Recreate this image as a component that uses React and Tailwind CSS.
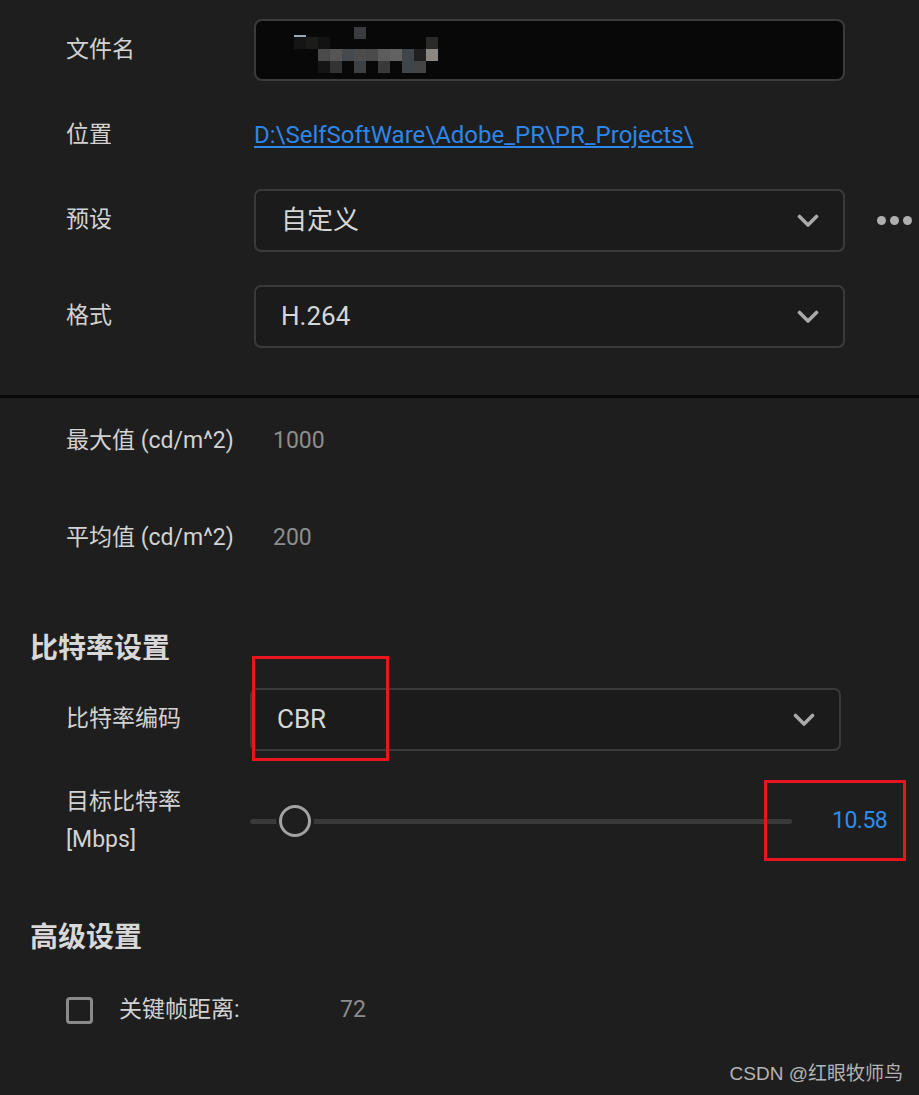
import { useState } from "react";

const font = { fontFamily: 'Roboto, "Noto Sans CJK SC", sans-serif' };

const Chevron = () => (
  <svg width="22" height="14" viewBox="0 0 22 14" className="shrink-0">
    <path d="M2.5 2.5 L11 11 L19.5 2.5" fill="none" stroke="#a9a9a9" strokeWidth="3.6" strokeLinecap="round" strokeLinejoin="round" />
  </svg>
);

// pixelated (blurred) file name
const Mosaic = () => {
  const cells = [
    [0, 0, "#151515"], [12, 0, "#1c1c1a"], [24, 0, "#121212"], [60, -10, "#3a3b3e"],
    [24, 12, "#4a4a4a"], [36, 12, "#555"], [48, 12, "#454a4e"], [60, 12, "#4c4c4c"], [72, 12, "#4a4a4a"],
    [84, 12, "#5c5c5c"], [96, 12, "#626262"], [108, 12, "#3f454a"], [120, 12, "#202020"], [132, 12, "#8a8782"],
    [24, 24, "#151515"], [36, 24, "#333"], [60, 24, "#3e4144"], [84, 24, "#3a3a3a"], [108, 24, "#3d464c"], [120, 24, "#444"],
    [132, 0, "#2a2a28"],
  ];
  return (
    <svg width="150" height="46" viewBox="0 -10 150 46">
      <rect x="0" y="-2" width="12" height="2" fill="#9ab" />
      {cells.map(([x, y, c], i) => (
        <rect key={i} x={x} y={y} width="12" height="12" fill={c} />
      ))}
    </svg>
  );
};

const Row = ({ label, h, children, className = "" }) => (
  <div className={`flex items-center ${className}`} style={{ height: h }}>
    <div className="w-[188px] shrink-0 text-[23px] text-[#d2d2d2]">{label}</div>
    {children}
  </div>
);

const Select = ({ value, width = "w-[591px]" }) => (
  <div className={`${width} h-full flex items-center justify-between pl-[25px] pr-[24px] bg-[#1b1b1b] border-2 border-[#3a3a3a] rounded-[7px]`}>
    <span className="text-[26px] text-[#d6d6d6]">{value}</span>
    <Chevron />
  </div>
);

export default function App() {
  const [keyframe, setKeyframe] = useState(false);

  return (
    <div className="relative w-[919px] h-[1095px] overflow-hidden bg-[#1e1e1e]" style={font}>
      {/* output settings */}
      <div className="pl-[66px] pt-[19px]">
        <Row label="文件名" h={62}>
          <div className="w-[591px] h-full flex items-center pl-[38px] bg-[#080808] border-2 border-[#3b3b3b] rounded-[8px]">
            <Mosaic />
          </div>
        </Row>
        <Row label="位置" h={108}>
          <a className="text-[24px] text-[#2d86e8] underline underline-offset-[3px]">
            D:\SelfSoftWare\Adobe_PR\PR_Projects\
          </a>
        </Row>
        <Row label="预设" h={63}>
          <Select value="自定义" />
          <div className="flex gap-[4px] ml-[32px]">
            <span className="w-[9px] h-[9px] rounded-full bg-[#b0b0b0]" />
            <span className="w-[9px] h-[9px] rounded-full bg-[#b0b0b0]" />
            <span className="w-[9px] h-[9px] rounded-full bg-[#b0b0b0]" />
          </div>
        </Row>
        <Row label="格式" h={63} className="mt-[33px]">
          <Select value="H.264" />
        </Row>
      </div>

      <div className="mt-[47px] h-[3px] bg-[#0a0a0a]" />

      {/* HDR */}
      <div className="pl-[66px] pt-[18px]">
        <div className="flex items-center h-[50px] text-[23px]">
          <span className="w-[207px] text-[#d2d2d2]">最大值 (cd/m^2)</span>
          <span className="text-[#8d8d8d]">1000</span>
        </div>
        <div className="flex items-center h-[50px] mt-[47px] text-[23px]">
          <span className="w-[207px] text-[#d2d2d2]">平均值 (cd/m^2)</span>
          <span className="text-[#8d8d8d]">200</span>
        </div>
      </div>

      {/* bitrate */}
      <div className="pl-[30px] mt-[68px]">
        <h2 className="text-[28px] font-bold text-[#d8d8d8] leading-[36px]">比特率设置</h2>
      </div>
      <div className="pl-[66px] mt-[21px]">
        <div className="flex items-center h-[63px]">
          <div className="w-[184px] shrink-0 text-[23px] text-[#d2d2d2]">比特率编码</div>
          <Select value="CBR" />
        </div>
        <div className="flex items-center mt-[25px] h-[90px]">
          <div className="w-[184px] shrink-0 text-[23px] leading-[38px] text-[#d2d2d2]">
            目标比特率
            <br />
            [Mbps]
          </div>
          <div className="relative w-[542px] h-[34px] flex items-center">
            <div className="w-full h-[5px] rounded-full bg-[#3a3a3a]" />
            <div className="absolute left-[29px] top-[1px] w-[32px] h-[32px] rounded-full border-[3px] border-[#a3a3a3] bg-[#1e1e1e] ring-[3px] ring-[#1e1e1e]" />
          </div>
          <span className="ml-[40px] text-[23px] text-[#2d8cf0] tracking-[-0.5px]">10.58</span>
        </div>
      </div>

      {/* advanced */}
      <div className="pl-[30px] mt-[54px]">
        <h2 className="text-[28px] font-bold text-[#d8d8d8] leading-[36px]">高级设置</h2>
      </div>
      <div className="pl-[66px] mt-[34px] flex items-center h-[40px]">
        <button
          onClick={() => setKeyframe(!keyframe)}
          className="w-[27px] h-[27px] rounded-[4px] border-[3px] border-[#8a8a8a]"
        />
        <span className="ml-[26px] w-[221px] text-[23px] text-[#d2d2d2]">关键帧距离:</span>
        <span className="text-[23px] text-[#8d8d8d]">72</span>
      </div>

      {/* annotations */}
      <div className="absolute left-[252px] top-[656px] w-[137px] h-[105px] border-[3px] border-[#e8141f]" />
      <div className="absolute left-[764px] top-[780px] w-[142px] h-[81px] border-[3px] border-[#e8141f]" />

      <div className="absolute right-[16px] bottom-[7px] text-[19px] text-[#b4b4b4]" style={{ fontFamily: '"Liberation Sans", "Noto Sans CJK SC", sans-serif' }}>
        CSDN @红眼牧师鸟
      </div>
    </div>
  );
}
